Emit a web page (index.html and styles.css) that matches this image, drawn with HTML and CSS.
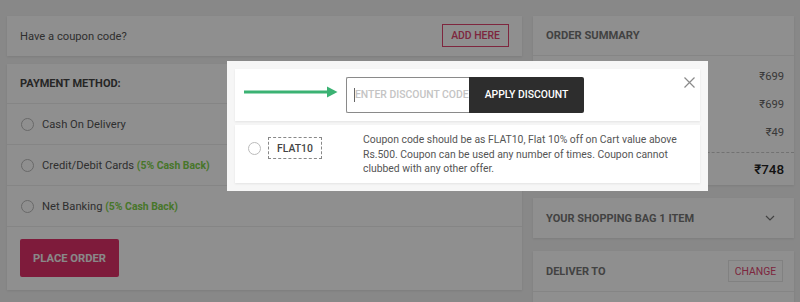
FILE: index.html
```html
<!DOCTYPE html>
<html>
<head>
<meta charset="utf-8">
<link rel="stylesheet" href="styles.css">
</head>
<body>
<div class="page">
  <div class="col-left">
    <div class="card coupon-card">
      <span class="coupon-q">Have a coupon code?</span>
      <button class="btn-outline">ADD HERE</button>
    </div>
    <div class="card payment-card">
      <div class="pay-head">PAYMENT METHOD:</div>
      <div class="pay-row"><span class="radio"></span><span>Cash On Delivery</span></div>
      <div class="pay-row"><span class="radio"></span><span>Credit/Debit Cards <b class="cash">(5% Cash Back)</b></span></div>
      <div class="pay-row"><span class="radio"></span><span>Net Banking <b class="cash">(5% Cash Back)</b></span></div>
      <div class="pay-foot"><button class="btn-place">PLACE ORDER</button></div>
    </div>
  </div>
  <div class="col-right">
    <div class="card summary-card">
      <div class="card-head">ORDER SUMMARY</div>
      <div class="sum-rows">
        <div class="sum-row"><span class="val">₹699</span></div>
        <div class="sum-row"><span class="val">₹699</span></div>
        <div class="sum-row"><span class="val">₹49</span></div>
      </div>
      <div class="sum-total"><span class="total-val">₹748</span></div>
    </div>
    <div class="card bag-card">
      <span>YOUR SHOPPING BAG 1 ITEM</span>
      <svg class="chev" width="10" height="6" viewBox="0 0 10 6"><path d="M1 1l4 4 4-4" fill="none" stroke="#777" stroke-width="1.2"/></svg>
    </div>
    <div class="card deliver-card">
      <div class="deliver-head"><span>DELIVER TO</span><button class="btn-change">CHANGE</button></div>
    </div>
  </div>
</div>
<div class="overlay"></div>
<div class="modal">
  <div class="panel panel-apply">
    <svg class="arrow" width="94" height="12" viewBox="0 0 94 12"><path d="M0 6h84" stroke="#3bb273" stroke-width="3"/><path d="M83 0.5L93.5 6 83 11.5z" fill="#3bb273"/></svg>
    <div class="apply-group">
      <div class="code-input"><span class="caret"></span><span class="ph">ENTER DISCOUNT CODE</span></div>
      <button class="btn-apply">APPLY DISCOUNT</button>
    </div>
    <svg class="close" width="11" height="11" viewBox="0 0 11 11"><path d="M0.5 0.5l10 10M10.5 0.5l-10 10" stroke="#8a8a8a" stroke-width="1.2"/></svg>
  </div>
  <div class="panel panel-coupon">
    <span class="radio"></span>
    <span class="code-tag">FLAT10</span>
    <p class="coupon-desc">Coupon code should be as FLAT10, Flat 10% off on Cart value above Rs.500. Coupon can be used any number of times. Coupon cannot clubbed with any other offer.</p>
  </div>
</div>
</body>
</html>
```
FILE: styles.css
```css
* { box-sizing: border-box; }
html, body { margin: 0; height: 100%; }
body {
  background: #f2f2f2;
  font-family: Roboto, "Liberation Sans", sans-serif;
  color: #333;
  font-size: 11.2px;
  overflow: hidden;
}
button { font-family: inherit; cursor: pointer; }
.page {
  display: grid;
  grid-template-columns: 515px 261px;
  column-gap: 11px;
  padding: 16px 6px 0 7px;
}
.col-left, .col-right { display: flex; flex-direction: column; }
.col-left { gap: 8px; }
.col-right { gap: 13px; }
.card {
  background: #fff;
  box-shadow: 0 1px 2px rgba(0,0,0,0.08);
}
.coupon-card {
  height: 40px;
  display: flex;
  align-items: center;
  justify-content: space-between;
  padding: 0 13px 0 13px;
}
.coupon-q { font-size: 11.2px; color: #555; }
.btn-outline {
  background: #fff;
  border: 1px solid #e0456f;
  color: #e0456f;
  font-size: 10.4px;
  font-weight: 500;
  height: 23px;
  width: 67px;
  padding: 0;
  margin-top: -2px;
}
.payment-card { height: 226px; }
.pay-head {
  height: 40px;
  display: flex;
  align-items: center;
  padding: 0 13px;
  font-weight: 700;
  font-size: 11px;
  color: #444;
  border-bottom: 1px solid #eee;
}
.pay-row {
  height: 41px;
  display: flex;
  align-items: center;
  gap: 8px;
  padding: 0 14px;
  border-bottom: 1px solid #eee;
  font-size: 11.2px;
  color: #555;
}
.cash { color: #7fd34c; font-weight: 700; font-size: 10.4px; }
.radio {
  width: 13px;
  height: 13px;
  border-radius: 50%;
  border: 1px solid #bbb;
  background: #fff;
  flex: none;
}
.pay-foot { padding: 12px 13px; }
.btn-place {
  width: 99px;
  height: 38px;
  border: none;
  border-radius: 2px;
  background: #e0316a;
  color: #f4f4f4;
  font-weight: 700;
  font-size: 11.2px;
  padding: 0;
}
.card-head {
  height: 40px;
  display: flex;
  align-items: center;
  padding: 0 13px;
  font-weight: 700;
  color: #777;
  font-size: 11.2px;
  border-bottom: 1px solid #eee;
}
.summary-card { height: 169px; }
.sum-rows { padding: 6px 10px 6px 13px; border-bottom: 1px dashed #ccc; }
.sum-row {
  height: 28px;
  display: flex;
  justify-content: flex-end;
  align-items: center;
  font-size: 11.2px;
  color: #666;
}
.sum-total {
  height: 32px;
  display: flex;
  justify-content: flex-end;
  align-items: center;
  padding: 0 10px 0 13px;
}
.total-val { font-size: 13.4px; color: #222; font-weight: 500; }
.bag-card {
  height: 40px;
  display: flex;
  justify-content: space-between;
  align-items: center;
  padding: 0 19px 0 13px;
  font-weight: 700;
  font-size: 11px;
  color: #777;
}
.deliver-card { height: 60px; }
.deliver-head {
  height: 41px;
  display: flex;
  align-items: center;
  justify-content: space-between;
  padding: 0 11px 0 13px;
  border-bottom: 1px solid #eee;
  font-weight: 700;
  font-size: 11px;
  color: #777;
}
.btn-change {
  height: 22px;
  width: 55px;
  padding: 0;
  background: #fff;
  border: 1px solid #e6e6e6;
  color: #e0456f;
  font-size: 10.4px;
}
.overlay {
  position: fixed;
  inset: 0;
  background: rgba(0,0,0,0.44);
}
.modal {
  position: fixed;
  left: 227px;
  top: 61px;
  width: 481px;
  height: 130px;
  background: #f6f6f6;
  padding: 8px;
  display: flex;
  flex-direction: column;
  gap: 4px;
}
.panel { background: #fff; box-shadow: 0 1px 2px rgba(0,0,0,0.08); }
.panel-apply {
  height: 52px;
  display: flex;
  align-items: center;
  padding-left: 9px;
  position: relative;
}
.arrow { margin-top: -7px; }
.apply-group { display: flex; margin-left: 8px; margin-top: -1px; }
.code-input {
  width: 123px;
  height: 36px;
  border: 1px solid #8a8a8a;
  border-right: none;
  border-radius: 2px 0 0 2px;
  display: flex;
  align-items: center;
  padding-left: 7px;
  overflow: hidden;
  white-space: nowrap;
}
.caret { width: 1px; height: 14px; background: #666; flex: none; }
.ph { color: #c4c4c4; font-weight: 500; font-size: 10.4px; }
.btn-apply {
  width: 115px;
  height: 36px;
  border: none;
  border-radius: 0 2px 2px 0;
  background: #2d2d2d;
  color: #fff;
  font-weight: 500;
  font-size: 10.4px;
  padding: 0;
}
.close { position: absolute; right: 5px; top: 8px; }
.panel-coupon {
  height: 58px;
  display: flex;
  align-items: flex-start;
  padding: 0 0 0 13px;
}
.panel-coupon .radio { margin-top: 17px; }
.code-tag {
  margin: 12px 0 0 7px;
  width: 54px;
  height: 22px;
  border: 1px dashed #888;
  display: flex;
  align-items: center;
  justify-content: center;
  font-size: 10.4px;
  font-weight: 500;
  color: #444;
}
.coupon-desc {
  margin: 8px 0 0 41px;
  width: 330px;
  font-size: 10.4px;
  line-height: 14.5px;
  color: #555;
}
```
